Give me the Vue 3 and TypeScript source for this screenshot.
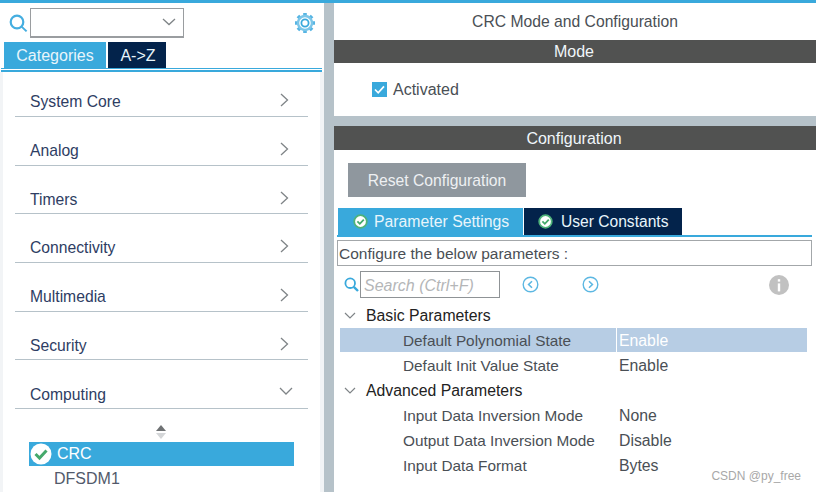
<script setup lang="ts">
import { ref } from "vue";

const categories = ref(["System Core", "Analog", "Timers", "Connectivity", "Multimedia", "Security"]);

interface Param {
  name: string;
  value: string;
  selected?: boolean;
}

interface Group {
  title: string;
  params: Param[];
}

const groups = ref<Group[]>([
  {
    title: "Basic Parameters",
    params: [
      { name: "Default Polynomial State", value: "Enable", selected: true },
      { name: "Default Init Value State", value: "Enable" },
    ],
  },
  {
    title: "Advanced Parameters",
    params: [
      { name: "Input Data Inversion Mode", value: "None" },
      { name: "Output Data Inversion Mode", value: "Disable" },
      { name: "Input Data Format", value: "Bytes" },
    ],
  },
]);
</script>

<template>
  <div class="app">
    <aside class="left">
      <div class="search-row">
        <svg class="search-icon" width="19" height="19" viewBox="0 0 19 19">
          <circle cx="8" cy="8" r="6.3" fill="none" stroke="#45aee0" stroke-width="2.2" />
          <path d="M12.6 12.6L17.6 17.4" stroke="#45aee0" stroke-width="2" />
        </svg>
        <div class="combo">
          <svg width="14" height="8" viewBox="0 0 14 8">
            <path d="M1 1L7 6.5L13 1" fill="none" stroke="#7f8487" stroke-width="1.3" />
          </svg>
        </div>
        <svg class="gear" width="22" height="22" viewBox="0 0 22 22">
          <path
            d="M11 1V4M11 18V21M1 11H4M18 11H21M3.9 3.9L6 6M16 16L18.1 18.1M18.1 3.9L16 6M6 16L3.9 18.1"
            stroke="#55b4e3"
            stroke-width="3.6"
          />
          <circle cx="11" cy="11" r="7" fill="#fff" stroke="#7cc6e8" stroke-width="2.4" />
          <circle cx="11" cy="11" r="3.6" fill="#fff" stroke="#39a9dc" stroke-width="1.8" />
        </svg>
      </div>
      <div class="left-tabs">
        <div class="left-tab active">Categories</div>
        <div class="left-tab dark">A-&gt;Z</div>
      </div>
      <div class="left-rule"></div>
      <div class="left-body">
        <div v-for="category in categories" :key="category" class="category">
          <span>{{ category }}</span>
          <svg width="9" height="14" viewBox="0 0 9 14">
            <path d="M1 1L7.5 7L1 13" fill="none" stroke="#7f8487" stroke-width="1.3" />
          </svg>
        </div>
        <div class="category">
          <span>Computing</span>
          <svg class="down" width="14" height="9" viewBox="0 0 14 9">
            <path d="M1 1L7 7L13 1" fill="none" stroke="#7f8487" stroke-width="1.3" />
          </svg>
        </div>
        <div class="scroll-up">
          <svg width="12" height="14" viewBox="0 0 12 14">
            <path d="M6 0L11 6H1Z" fill="#6f7274" />
            <path d="M1 8H11L6 14Z" fill="#d4d6d8" />
          </svg>
        </div>
        <div class="ip-row selected">
          <svg width="22" height="22" viewBox="0 0 22 22">
            <circle cx="11" cy="11" r="10.5" fill="#fff" />
            <path d="M5.5 11L9.5 15L16.5 7.5" fill="none" stroke="#45a96b" stroke-width="3" />
          </svg>
          <span>CRC</span>
        </div>
        <div class="ip-row plain">DFSDM1</div>
      </div>
    </aside>

    <div class="splitter"></div>

    <main class="right">
      <section class="mode">
        <div class="title">CRC Mode and Configuration</div>
        <div class="bar">Mode</div>
        <label class="activated">
          <span class="checkbox">
            <svg width="15" height="15" viewBox="0 0 15 15">
              <path d="M3 7.5L6.2 10.8L12 4.4" fill="none" stroke="#fff" stroke-width="1.7" />
            </svg>
          </span>
          Activated
        </label>
      </section>

      <section class="config">
        <div class="bar config-bar">Configuration</div>
        <div class="reset">Reset Configuration</div>
        <div class="config-tabs">
          <div class="config-tab active">
            <svg width="15" height="15" viewBox="0 0 15 15">
              <circle cx="7.5" cy="7.5" r="6.3" fill="#fff" stroke="#4fb27a" stroke-width="1.8" />
              <path d="M4.4 7.4L6.8 9.8L10.8 5.6" fill="none" stroke="#45a96b" stroke-width="1.8" />
            </svg>
            Parameter Settings
          </div>
          <div class="config-tab dark">
            <svg width="15" height="15" viewBox="0 0 15 15">
              <circle cx="7.5" cy="7.5" r="6.3" fill="#fff" stroke="#4fb27a" stroke-width="1.8" />
              <path d="M4.4 7.4L6.8 9.8L10.8 5.6" fill="none" stroke="#45a96b" stroke-width="1.8" />
            </svg>
            User Constants
          </div>
        </div>
        <div class="hint">Configure the below parameters :</div>
        <div class="filter-row">
          <svg width="15" height="15" viewBox="0 0 15 15">
            <circle cx="6.2" cy="6.2" r="4.8" fill="none" stroke="#39a9dc" stroke-width="1.8" />
            <path d="M9.8 9.8L14 14" stroke="#39a9dc" stroke-width="2.4" />
          </svg>
          <div class="filter-input">Search (Ctrl+F)</div>
          <svg class="nav-prev" width="17" height="17" viewBox="0 0 17 17">
            <circle cx="8.5" cy="8.5" r="7.3" fill="none" stroke="#5cb7e2" stroke-width="1.4" />
            <path d="M10 5.2L6.6 8.5L10 11.8" fill="none" stroke="#5cb7e2" stroke-width="1.6" />
          </svg>
          <svg class="nav-next" width="17" height="17" viewBox="0 0 17 17">
            <circle cx="8.5" cy="8.5" r="7.3" fill="none" stroke="#5cb7e2" stroke-width="1.4" />
            <path d="M7 5.2L10.4 8.5L7 11.8" fill="none" stroke="#5cb7e2" stroke-width="1.6" />
          </svg>
          <svg class="info" width="20" height="20" viewBox="0 0 20 20">
            <circle cx="10" cy="10" r="10" fill="#c1c1c1" />
            <rect x="8.8" y="8.4" width="2.4" height="8" fill="#fff" />
            <rect x="8.8" y="4.2" width="2.4" height="2.4" fill="#fff" />
          </svg>
        </div>
        <div class="tree">
          <template v-for="group in groups" :key="group.title">
            <div class="group">
              <svg width="12" height="7" viewBox="0 0 12 7">
                <path d="M1 1L6 6L11 1" fill="none" stroke="#7f8487" stroke-width="1.2" />
              </svg>
              {{ group.title }}
            </div>
            <div v-for="param in group.params" :key="param.name" class="param" :class="{ selected: param.selected }">
              <span class="param-name">{{ param.name }}</span>
              <span class="param-value">{{ param.value }}</span>
            </div>
          </template>
        </div>
        <div class="watermark">CSDN @py_free</div>
      </section>
    </main>
  </div>
</template>

<style>
html,
body {
  margin: 0;
  overflow: hidden;
}
</style>

<style scoped>
.app {
  display: flex;
  width: 816px;
  height: 492px;
  box-sizing: border-box;
  border-top: 3px solid #39a9dc;
  overflow: hidden;
  background: #fff;
  font-family: "Liberation Sans", Arial, sans-serif;
  font-size: 16px;
  color: #4a4f55;
}

.left {
  width: 324px;
  flex-shrink: 0;
  display: flex;
  flex-direction: column;
}

.search-row {
  display: flex;
  align-items: center;
  height: 39px;
  padding-left: 9px;
  box-sizing: border-box;
}

.search-icon {
  margin-top: 1px;
}

.combo {
  width: 154px;
  height: 30px;
  margin-left: 2px;
  box-sizing: border-box;
  border: 1px solid #9a9da0;
  border-bottom-width: 2px;
  display: flex;
  align-items: center;
  justify-content: flex-end;
  padding-right: 7px;
}

.gear {
  margin-left: 110px;
  margin-top: 1px;
}

.left-tabs {
  display: flex;
  padding-left: 4px;
  height: 26px;
}

.left-tab {
  display: flex;
  align-items: center;
  justify-content: center;
  padding-top: 2px;
  box-sizing: border-box;
  color: #e8f5fb;
}

.left-tab.active {
  width: 102px;
  background: #39a9dc;
}

.left-tab.dark {
  width: 58px;
  margin-left: 2px;
  padding-left: 2px;
  background: #03234b;
}

.left-rule {
  margin: 0 2px 0 1px;
  border-top: 1px solid #39a9dc;
  border-bottom: 2px solid #39a9dc;
  height: 1px;
  background: #fff;
}

.left-body {
  flex: 1;
  margin: 0 4px 0 3px;
  padding: 0 12px;
  box-shadow: -3px 0 0 #f2f4f6, 4px 0 0 #f2f4f6;
  min-height: 0;
}

.category {
  height: 48.7px;
  box-sizing: border-box;
  border-bottom: 1px solid #b6c2c9;
  display: flex;
  align-items: flex-end;
  justify-content: space-between;
  padding: 0 19px 4.6px 15px;
  color: #2e3d63;
  font-size: 15.7px;
}

.category:first-child {
  height: 45px;
}

.category svg {
  margin-bottom: 4px;
}

.category svg.down {
  margin-right: -4px;
  margin-bottom: 8px;
}

.scroll-up {
  display: flex;
  justify-content: center;
  padding: 16px 0 4px;
  height: 33px;
  box-sizing: border-box;
  margin-right: 1px;
}

.ip-row {
  margin-left: 14px;
  width: 265px;
  height: 24px;
  display: flex;
  align-items: center;
}

.ip-row.selected {
  background: #39a9dc;
  color: #fff;
  gap: 5px;
  padding-left: 1px;
  box-sizing: border-box;
}

.ip-row.plain {
  padding: 1px 0 0 25px;
  box-sizing: border-box;
  color: #525a6b;
}

.splitter {
  width: 10px;
  flex-shrink: 0;
  background: #b6c2c9;
}

.right {
  flex: 1;
  min-width: 0;
  display: flex;
  flex-direction: column;
  background: #b6c2c9;
  gap: 10px;
}

.mode {
  height: 113px;
  flex-shrink: 0;
  background: #fff;
}

.title {
  height: 37px;
  line-height: 37px;
  text-align: center;
  font-size: 15.7px;
}

.bar {
  height: 23px;
  line-height: 23px;
  background: #515251;
  color: #f0f6fa;
  text-align: center;
  padding-right: 2px;
}

.activated {
  display: flex;
  align-items: center;
  gap: 6px;
  margin: 19px 0 0 38px;
  height: 15px;
}

.checkbox {
  width: 15px;
  height: 15px;
  background: #39a9dc;
  display: block;
}

.checkbox svg {
  display: block;
}

.config {
  flex: 1;
  min-height: 0;
  background: #fff;
  position: relative;
}

.config-bar {
  height: 24px;
  line-height: 26px;
}

.reset {
  width: 178px;
  height: 34px;
  line-height: 36px;
  margin: 13px 0 0 14px;
  background: #8f979e;
  color: #eef0f2;
  text-align: center;
  font-size: 15.7px;
}

.config-tabs {
  display: flex;
  margin: 11px 0 0 4px;
  height: 27px;
  gap: 1px;
}

.config-tab {
  display: flex;
  align-items: center;
  gap: 6px;
  color: #e8f5fb;
  box-sizing: border-box;
  font-size: 15.8px;
}

.config-tab.active {
  width: 185px;
  padding-left: 15px;
  background: #39a9dc;
}

.config-tab.dark {
  width: 158px;
  padding-left: 14px;
  background: #03234b;
  gap: 8px;
  font-size: 15.6px;
}

.hint {
  margin: 0 4px 0 3px;
  height: 29px;
  box-sizing: border-box;
  border-top: 2px solid #39a9dc;
  position: relative;
  line-height: 33px;
  padding-left: 2px;
  font-size: 15.5px;
}

.hint::before {
  content: "";
  position: absolute;
  left: 0;
  right: 0;
  top: 3px;
  height: 26px;
  box-sizing: border-box;
  border: 1px solid #a3a7aa;
}

.filter-row {
  display: flex;
  align-items: center;
  height: 27px;
  margin-top: 7px;
  padding-left: 10px;
}

.filter-input {
  width: 140px;
  height: 27px;
  line-height: 27px;
  margin-left: 1px;
  box-sizing: border-box;
  border: 1px solid #8f9396;
  padding-left: 3px;
  font-style: italic;
  color: #b4b6b8;
}

.nav-prev {
  margin-left: 22px;
}

.nav-next {
  margin-left: 43px;
}

.info {
  margin-left: 170px;
}

.tree {
  margin: 5px 9px 0 6px;
}

.group {
  height: 25px;
  display: flex;
  align-items: center;
  gap: 10px;
  padding-left: 4px;
  color: #222;
  font-size: 15.8px;
}

.param {
  height: 25px;
  display: flex;
  align-items: center;
}

.param.selected {
  background: #b7cde4;
  height: 24px;
  margin-bottom: 1px;
}

.param-name {
  width: 277px;
  padding-left: 63px;
  box-sizing: border-box;
  height: 100%;
  display: flex;
  align-items: center;
  font-size: 15.35px;
}

.param.selected .param-name {
  border-right: 1px solid #fff;
  padding-top: 1px;
}

.param-value {
  padding-left: 2px;
  font-size: 15.8px;
}

.param.selected .param-value {
  color: #fff;
  padding-top: 1px;
}

.watermark {
  position: absolute;
  right: 15px;
  bottom: 9px;
  font-size: 12px;
  color: #a8a8a8;
}
</style>
